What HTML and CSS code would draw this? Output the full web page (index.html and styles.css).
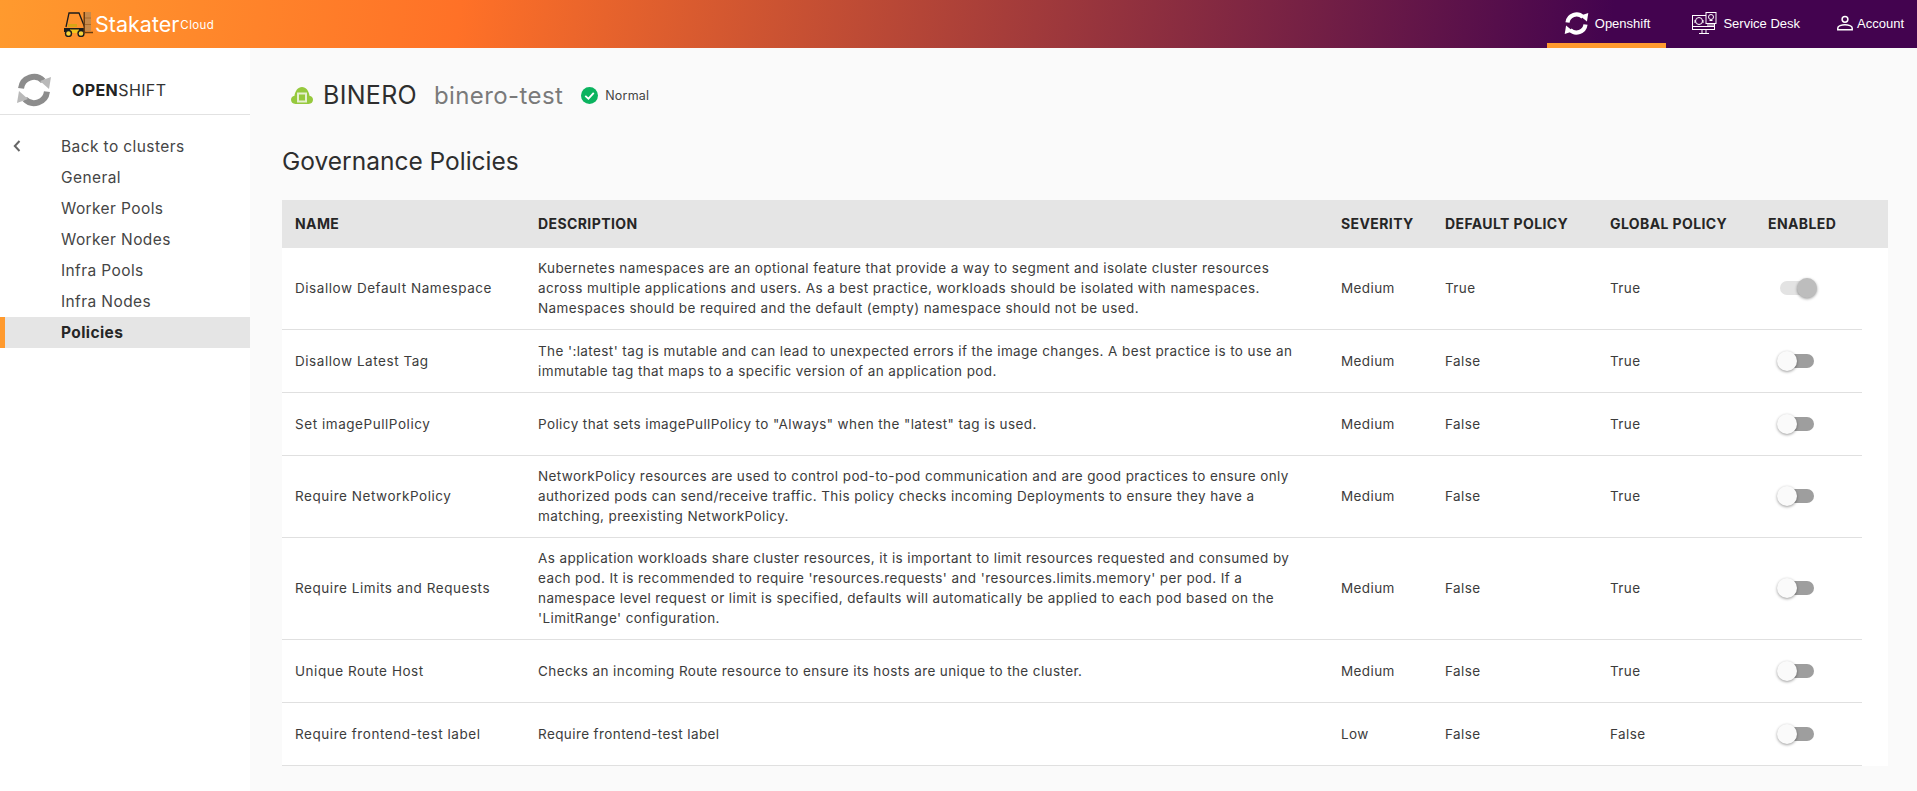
FILE: index.html
```html
<!DOCTYPE html>
<html lang="en">
<head>
    <meta charset="UTF-8">
    <title>Governance Policies</title>
    <link rel="stylesheet" href="styles.css">
</head>
<body>
    <header class="topbar">
        <a class="brand" href="#">
            <svg class="brand-logo" viewBox="0 0 32 26" width="32" height="26">
                <path d="M3 16 L6 2 H16 L22 17" fill="none" stroke="#1c1c1c" stroke-width="1.3"/>
                <rect x="5" y="13" width="9" height="3" fill="#d9a516"/>
                <path d="M1 17 H21 V21 H1 Z" fill="#1c1c1c"/>
                <rect x="7" y="18.5" width="9" height="3.5" fill="#f4c51d"/>
                <circle cx="5.5" cy="22.5" r="3" fill="#f6d23a" stroke="#1c1c1c" stroke-width="1.4"/>
                <circle cx="18" cy="22.5" r="3" fill="#f6d23a" stroke="#1c1c1c" stroke-width="1.4"/>
                <rect x="20.5" y="1" width="1.6" height="21" fill="#6b3d12"/>
                <rect x="22" y="1" width="6" height="19" fill="#c98a4a"/>
                <path d="M22 7 H28 M22 13.500 H28" stroke="#a86a2c" stroke-width="1"/>
                <path d="M20.500 21.500 H30" stroke="#6b3d12" stroke-width="1.500"/>
            </svg>
            <span class="brand-name">Stakater</span><span class="brand-sub">Cloud</span>
        </a>
        <nav class="topnav">
            <a class="topnav-item active" href="#">
                <svg viewBox="0 0 36 36" width="25" height="25">
                    <path d="M5.040 16.400 A13 13 0 0 1 27.200 8.800" fill="none" stroke="#fff" stroke-width="6"/>
                    <path d="M30.960 19.600 A13 13 0 0 1 8.800 27.200" fill="none" stroke="#fff" stroke-width="6"/>
                    <path d="M23 7 L35 3 L33 15 Z" fill="#fff"/>
                    <path d="M13 29 L1 33 L3 21 Z" fill="#fff"/>
                </svg>
                Openshift
            </a>
            <a class="topnav-item" href="#">
                <svg viewBox="0 0 25 23" width="25" height="23" fill="none" stroke="#fff" stroke-width="1">
                    <rect x="0.500" y="3.500" width="22" height="14"/>
                    <path d="M0.500 14.500 H22.500 M10 17.500 V21 M14 17.500 V21 M7 21.500 H17"/>
                    <circle cx="7" cy="9" r="3.500"/>
                    <path d="M3 11 V8 M11 11 V8"/>
                    <rect x="14" y="0.500" width="10" height="11" fill="#43034f"/>
                    <circle cx="19" cy="5" r="2.500"/>
                    <path d="M17.500 8.500 H20.500 M15 13 H22"/>
                </svg>
                Service Desk
            </a>
            <a class="topnav-item" href="#">
                <svg viewBox="0 0 16 16" width="16" height="16" fill="none" stroke="#fff" stroke-width="1.500">
                    <circle cx="8" cy="4.300" r="2.900"/>
                    <path d="M0.800 14.800 V13 C0.800 11 4.500 9.800 8 9.800 C11.500 9.800 15.200 11 15.200 13 V14.800 Z"/>
                </svg>
                Account
            </a>
        </nav>
    </header>

    <div class="layout">
        <aside class="sidebar">
            <div class="sidebar-head">
                <svg viewBox="0 0 36 36" width="36" height="36">
                    <path d="M5.040 16.400 A13 13 0 0 1 27.200 8.800" fill="none" stroke="#8c8c8c" stroke-width="6"/>
                    <path d="M30.960 19.600 A13 13 0 0 1 8.800 27.200" fill="none" stroke="#8c8c8c" stroke-width="6"/>
                    <path d="M24 9 L35 5 L33 17 Z" fill="#b9b9b9"/>
                    <path d="M12 27 L1 31 L3 19 Z" fill="#b9b9b9"/>
                </svg>
                <span class="sidebar-title"><b>OPEN</b>SHIFT</span>
            </div>
            <ul class="side-menu">
                <li>
                    <svg class="side-back" viewBox="0 0 8 12" width="8" height="12"><path d="M6.500 1 L1.800 6 L6.500 11" fill="none" stroke="#666" stroke-width="2"/></svg>
                    Back to clusters
                </li>
                <li>General</li>
                <li>Worker Pools</li>
                <li>Worker Nodes</li>
                <li>Infra Pools</li>
                <li>Infra Nodes</li>
                <li class="active">Policies</li>
            </ul>
        </aside>

        <main class="content">
            <div class="cluster-head">
                <svg class="cluster-icon" viewBox="0 0 22 17" width="22" height="17">
                    <path d="M4.500 17 C1.500 17 0 15 0 12.800 C0 10.500 1.500 9 3.500 8.800 C4 4 7 0 11 0 C15 0 18 4 18.500 8.800 C20.500 9 22 10.500 22 12.800 C22 15 20.500 17 17.500 17 Z" fill="#96c93d"/>
                    <rect x="7" y="6.500" width="8" height="8" fill="none" stroke="#e6f0d0" stroke-width="2"/>
                </svg>
                <span class="cluster-name">BINERO</span>
                <span class="cluster-id">binero-test</span>
                <svg class="status-icon" viewBox="0 0 16 16" width="17" height="17">
                    <circle cx="8" cy="8" r="8" fill="#0bb35f"/>
                    <path d="M4 8.300 L7 11 L12 5.500" fill="none" stroke="#fff" stroke-width="1.700"/>
                </svg>
                <span class="status-text">Normal</span>
            </div>
            <h1>Governance Policies</h1>

            <table class="policies">
                <thead>
                    <tr>
                        <th class="col-name">Name</th>
                        <th class="col-desc">Description</th>
                        <th class="col-sev">Severity</th>
                        <th class="col-def">Default Policy</th>
                        <th class="col-glob">Global Policy</th>
                        <th class="col-on">Enabled</th>
                        <th class="col-gap"></th>
                    </tr>
                </thead>
                <tbody>
                    <tr>
                        <td>Disallow Default Namespace</td>
                        <td>Kubernetes namespaces are an optional feature that provide a way to segment and isolate cluster resources across multiple applications and users. As a best practice, workloads should be isolated with namespaces. Namespaces should be required and the default (empty) namespace should not be used.</td>
                        <td>Medium</td><td>True</td><td>True</td>
                        <td><span class="switch locked"></span></td>
                        <td class="col-gap"></td>
                    </tr>
                    <tr>
                        <td>Disallow Latest Tag</td>
                        <td>The ':latest' tag is mutable and can lead to unexpected errors if the image changes. A best practice is to use an immutable tag that maps to a specific version of an application pod.</td>
                        <td>Medium</td><td>False</td><td>True</td>
                        <td><span class="switch"></span></td>
                        <td class="col-gap"></td>
                    </tr>
                    <tr>
                        <td>Set imagePullPolicy</td>
                        <td>Policy that sets imagePullPolicy to "Always" when the "latest" tag is used.</td>
                        <td>Medium</td><td>False</td><td>True</td>
                        <td><span class="switch"></span></td>
                        <td class="col-gap"></td>
                    </tr>
                    <tr>
                        <td>Require NetworkPolicy</td>
                        <td>NetworkPolicy resources are used to control pod-to-pod communication and are good practices to ensure only authorized pods can send/receive traffic. This policy checks incoming Deployments to ensure they have a matching, preexisting NetworkPolicy.</td>
                        <td>Medium</td><td>False</td><td>True</td>
                        <td><span class="switch"></span></td>
                        <td class="col-gap"></td>
                    </tr>
                    <tr>
                        <td>Require Limits and Requests</td>
                        <td>As application workloads share cluster resources, it is important to limit resources requested and consumed by each pod. It is recommended to require 'resources.requests' and 'resources.limits.memory' per pod. If a namespace level request or limit is specified, defaults will automatically be applied to each pod based on the 'LimitRange' configuration.</td>
                        <td>Medium</td><td>False</td><td>True</td>
                        <td><span class="switch"></span></td>
                        <td class="col-gap"></td>
                    </tr>
                    <tr>
                        <td>Unique Route Host</td>
                        <td>Checks an incoming Route resource to ensure its hosts are unique to the cluster.</td>
                        <td>Medium</td><td>False</td><td>True</td>
                        <td><span class="switch"></span></td>
                        <td class="col-gap"></td>
                    </tr>
                    <tr>
                        <td>Require frontend-test label</td>
                        <td>Require frontend-test label</td>
                        <td>Low</td><td>False</td><td>False</td>
                        <td><span class="switch"></span></td>
                        <td class="col-gap"></td>
                    </tr>
                </tbody>
            </table>
        </main>
    </div>
</body>
</html>
```

FILE: styles.css
```css
* {
    box-sizing: border-box;
}

html, body {
    height: 100%;
}

body {
    margin: 0;
    display: flex;
    flex-direction: column;
    overflow: hidden;
    font-family: 'Inter', 'Liberation Sans', sans-serif;
    background-color: #fafafa;
    color: #3c3c3c;
}

a {
    color: inherit;
    text-decoration: none;
}

.topbar {
    height: 48px;
    flex-shrink: 0;
    display: flex;
    justify-content: space-between;
    background: linear-gradient(97deg, #ff9a2e 0%, #ff7127 24%, #43034f 84%);
    color: #ffffff;
}

.brand {
    display: flex;
    align-items: center;
    padding-left: 63px;
}

.brand-name {
    font-size: 21.500px;
}

.brand-sub {
    font-size: 11.500px;
    letter-spacing: 0.4px;
    margin-left: 1px;
    margin-top: 1px;
}

.topnav {
    display: flex;
    padding-right: 13px;
    font-family: 'Liberation Sans', sans-serif;
    font-size: 13px;
}

.topnav-item {
    display: flex;
    align-items: center;
    gap: 6px;
    padding: 0 16px 2px 17px;
}

.topnav-item + .topnav-item {
    padding: 0 0 2px 26px;
}

.topnav-item:last-child {
    padding-left: 37px;
    gap: 4px;
}

.topnav-item.active {
    border-bottom: 5px solid #ff9a2e;
    padding-top: 5px;
}

.layout {
    flex: 1;
    display: flex;
    min-height: 0;
}

.sidebar {
    width: 250px;
    flex-shrink: 0;
    background-color: #ffffff;
}

.sidebar-head {
    height: 67px;
    display: flex;
    align-items: center;
    padding: 17px 0 0 16px;
    border-bottom: 1px solid #e2e2e2;
}

.sidebar-title {
    margin-left: 20px;
    font-size: 16px;
    letter-spacing: 0.4px;
    color: #333333;
}

.sidebar-title b {
    font-weight: 700;
    color: #222222;
}

.side-menu {
    list-style: none;
    margin: 0;
    padding: 16px 0 0;
}

.side-menu li {
    position: relative;
    height: 31px;
    line-height: 31px;
    padding-left: 61px;
    font-size: 15.500px;
    letter-spacing: 0.4px;
    color: #454545;
}

.side-menu li.active {
    font-weight: 700;
    color: #262626;
    background-color: #e5e5e5;
    border-left: 5px solid #ff9a2e;
    padding-left: 56px;
}

.side-back {
    position: absolute;
    left: 13px;
    top: 9px;
}

.content {
    flex: 1;
    padding: 0 29px 0 32px;
    min-width: 0;
}

.cluster-head {
    display: flex;
    align-items: center;
    height: 32px;
    margin-top: 31px;
    padding-left: 9px;
}

.cluster-name {
    margin-left: 10px;
    font-size: 25px;
    color: #2e2e2e;
    letter-spacing: 0.3px;
}

.cluster-id {
    margin-left: 17px;
    font-size: 24px;
    color: #7a7a7a;
    letter-spacing: 0.4px;
}

.status-icon {
    margin-left: 18px;
}

.status-text {
    margin-left: 7px;
    font-size: 12.500px;
    letter-spacing: 0.2px;
    color: #444444;
}

h1 {
    margin: 32px 0 0;
    height: 36px;
    line-height: 36px;
    font-size: 24.500px;
    font-weight: 400;
    color: #2e2e2e;
}

.policies {
    width: 1606px;
    margin-top: 21px;
    border-collapse: collapse;
    table-layout: fixed;
    background-color: #ffffff;
    font-size: 13.500px;
    line-height: 20px;
    letter-spacing: 0.4px;
}

.policies th {
    height: 48px;
    padding: 0 0 0 13px;
    background-color: #e5e5e5;
    color: #262626;
    font-size: 14px;
    font-weight: 700;
    text-align: left;
    text-transform: uppercase;
}

.policies td {
    padding: 10px 13px 11px;
    height: 63px;
    border-bottom: 1px solid #e0e0e0;
    vertical-align: middle;
}

.policies td:first-child {
    letter-spacing: 0.55px;
}

.policies td.col-gap {
    padding: 0;
    border-bottom: none;
}

.col-name { width: 243px; }
.col-desc { width: 803px; }
.col-sev { width: 104px; }
.col-def { width: 165px; }
.col-glob { width: 158px; }
.col-on { width: 107px; }
.col-gap { width: 26px; }

.switch {
    position: relative;
    display: block;
    width: 34px;
    height: 14px;
    margin-left: 12px;
    border-radius: 7px;
    background-color: #9e9e9e;
}

.switch::after {
    content: "";
    position: absolute;
    left: -3px;
    top: -3px;
    width: 20px;
    height: 20px;
    border-radius: 50%;
    background-color: #fafafa;
    box-shadow: 0 1px 3px rgba(0, 0, 0, 0.4);
}

.switch.locked {
    background-color: #e3e3e3;
}

.switch.locked::after {
    left: 17px;
    background-color: #bdbdbd;
}
```
